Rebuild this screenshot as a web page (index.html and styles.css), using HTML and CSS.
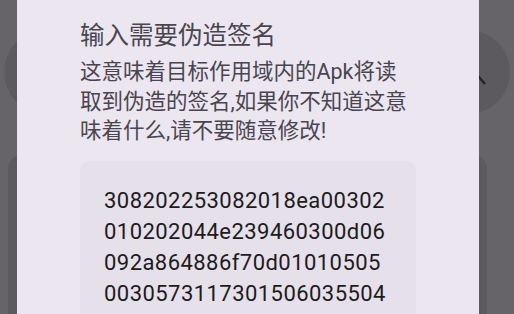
FILE: index.html
```html
<!DOCTYPE html>
<html lang="zh-CN">
<head>
    <meta charset="UTF-8">
    <meta name="viewport" content="width=device-width, initial-scale=1.0">
    <title>伪造签名</title>
    <link rel="stylesheet" href="styles.css">
</head>
<body>

    <div class="backdrop">
        <div class="top-row">
            <div class="round-btn"></div>
            <div class="round-btn">
                <svg class="arrow" width="84" height="84" viewBox="0 0 84 84">
                    <path d="M38 30 L59 54" stroke="#262428" stroke-width="2.6" fill="none"/>
                </svg>
            </div>
        </div>
        <div class="back-card"></div>
    </div>

    <div class="dialog">
        <h2 class="dialog-title">输入需要伪造签名</h2>
        <p class="dialog-text">这意味着目标作用域内的Apk将读取到伪造的签名,如果你不知道这意味着什么,请不要随意修改!</p>
        <div class="sig-box">
            <div class="sig-text">308202253082018ea00302010202044e239460300d06092a864886f70d010105050030573117301506035504</div>
        </div>
    </div>

</body>
</html>
```

FILE: styles.css
```css
*,
::after,
::before {
    margin: 0;
    padding: 0;
    box-sizing: border-box;
}

html {
    font-family: Roboto, "Noto Sans CJK SC", sans-serif;
}

body {
    background-color: #666468;
    width: 514px;
    height: 314px;
    position: relative;
    overflow: hidden;
}

.backdrop {
    display: flex;
    flex-direction: column;
    height: 314px;
}

.top-row {
    display: flex;
    justify-content: space-between;
    padding: 30px 4px 0;
}

.round-btn {
    width: 84px;
    height: 84px;
    border-radius: 50%;
    background-color: #5c5a5e;
}

.arrow {
    display: block;
}

.back-card {
    flex: 1;
    margin: 41px 0 0 8px;
    width: 479px;
    border-radius: 14px 14px 0 0;
    background-color: #5c5a5e;
}

/* dialog sits over the dimmed page */
.dialog {
    position: absolute;
    top: 0;
    left: 17px;
    width: 462px;
    height: 314px;
    overflow: hidden;
    background-color: #ece6f0;
    padding: 20px 63px 0;
}

.dialog-title {
    font-size: 24.5px;
    font-weight: normal;
    line-height: 32px;
    color: #49454f;
}

.dialog-text {
    margin-top: 5px;
    font-size: 21.5px;
    line-height: 29.5px;
    color: #49454f;
}

.sig-box {
    margin-top: 15px;
    background-color: #e6e0ea;
    border-radius: 10px 10px 0 0;
    padding: 24px 24px 4px;
}

.sig-text {
    font-size: 22px;
    line-height: 31px;
    letter-spacing: 0.45px;
    color: #1d1b20;
    word-break: break-all;
}
```
